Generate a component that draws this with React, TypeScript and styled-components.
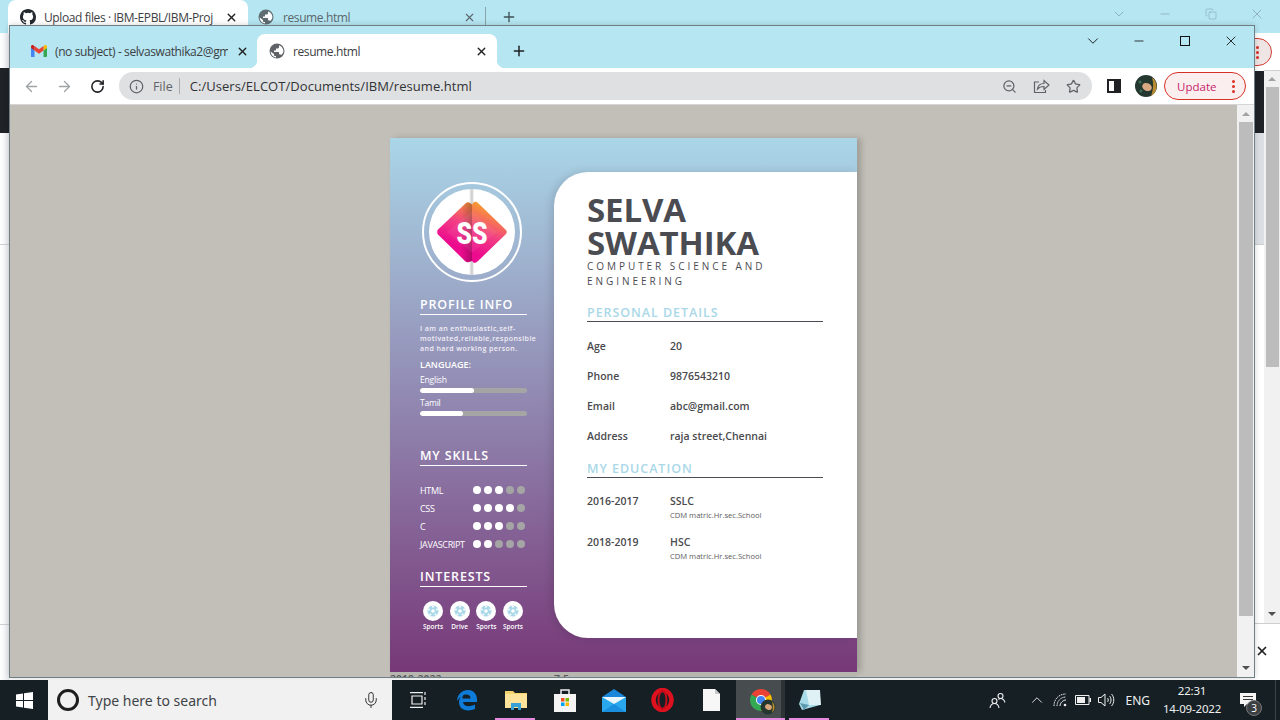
import React from "react";
import styled, { createGlobalStyle } from "styled-components";
import { ArrowLeft, ArrowRight, RotateCw, Info, ZoomOut, Star, X, Plus, ChevronDown, ChevronUp, Minus, Copy, Mic } from "lucide-react";

const GlobalStyle = createGlobalStyle`
  html, body {
    margin: 0;
    padding: 0;
    width: 1280px;
    height: 720px;
    overflow: hidden;
    font-family: "Open Sans", "Noto Sans", sans-serif;
  }
  * { box-sizing: border-box; }
`;

const Screen = styled.div`
  width: 1280px;
  height: 720px;
  display: flex;
  flex-direction: column;
  overflow: hidden;
`;

const Desktop = styled.div`
  position: relative;
  height: 680px;
  background: #fff;
  overflow: hidden;
`;

/* window behind the active one */
const BackWindow = styled.div`
  position: absolute;
  inset: 0;
  background: linear-gradient(90deg, #fff 0, #e9ebef 9px, #fff 10px);
`;

const BackStrip = styled.div`
  height: 33px;
  background: #b5e6f2;
  display: flex;
  align-items: flex-start;
  padding-left: 8px;
`;

const BackTabActive = styled.div`
  width: 240px;
  height: 34px;
  background: #fff;
  border-radius: 8px 8px 0 0;
  display: flex;
  align-items: center;
  padding: 0 10px 0 12px;
  gap: 8px;
  font-size: 12px;
  color: #3c4043;
`;

const BackTab = styled.div`
  width: 238px;
  height: 20px;
  margin-top: 7px;
  display: flex;
  align-items: center;
  padding: 0 9px 0 10px;
  gap: 9px;
  font-size: 12px;
  color: #5b666b;
  border-right: 1px solid #8aa4ab;
`;

const TabTitle = styled.span`
  flex: 1;
  min-width: 0;
  overflow: hidden;
  white-space: nowrap;
  letter-spacing: -0.4px;
`;

const BackControls = styled.div`
  position: absolute;
  top: 0;
  right: 0;
  height: 28px;
  display: flex;
  align-items: center;
  color: #7d9aa3;
`;

const BackControl = styled.span`
  width: 46px;
  display: flex;
  justify-content: center;
`;

const BackPlus = styled.span`
  color: #3f5257;
  margin: 9px 0 0 15px;
  display: flex;
`;

const DarkBand = styled.div<{ $side: "left" | "right" }>`
  position: absolute;
  background: #1f2226;
  ${(p) =>
    p.$side === "left"
      ? "left: 0; width: 10px; top: 68px; height: 65px;"
      : "left: 1254px; width: 10px; top: 71px; height: 62px;"}
`;

const RightShade = styled.div`
  position: absolute;
  left: 1254px;
  top: 133px;
  width: 10px;
  height: 111px;
  background: #dcdfe3;
`;

const SideRule = styled.div<{ $left: number; $top: number; $width: number }>`
  position: absolute;
  left: ${(p) => p.$left}px;
  top: ${(p) => p.$top}px;
  width: ${(p) => p.$width}px;
  height: 1px;
  background: #cdced2;
`;

const BackUpdate = styled.div`
  position: absolute;
  left: 1236px;
  top: 38px;
  width: 36px;
  height: 28px;
  border: 1px solid #d23a32;
  border-radius: 14px;
  background: #f0e5e5;
  display: flex;
  align-items: center;
  justify-content: flex-end;
  padding-right: 12px;
`;

const BackScroll = styled.div`
  position: absolute;
  left: 1264px;
  top: 70px;
  width: 16px;
  height: 553px;
  background: #f1f1f1;
  border-top: 1px solid #d0d0d0;
  display: flex;
  flex-direction: column;
  align-items: center;
`;

const BackThumb = styled.div`
  width: 13px;
  height: 280px;
  margin-bottom: 239px;
  background: #bcbcbc;
`;

const CloseGlyph = styled.span`
  position: absolute;
  left: 1255px;
  top: 644px;
  display: flex;
  color: #222;
`;

const FrontWindow = styled.div`
  position: absolute;
  left: 9px;
  top: 25px;
  width: 1246px;
  height: 653px;
  border: 1px solid #6f7f85;
  box-shadow: 0 0 6px rgba(0, 0, 0, 0.18);
  display: flex;
  flex-direction: column;
  background: #fff;
`;

const TabStrip = styled.div`
  height: 42px;
  background: #b5e6f2;
  display: flex;
  align-items: flex-end;
  padding-left: 7px;
  flex-shrink: 0;
`;

const Tab = styled.div<{ $active?: boolean }>`
  position: relative;
  height: 34px;
  width: 240px;
  display: flex;
  align-items: center;
  gap: 8px;
  padding: 0 ${(p) => (p.$active ? "9px 0 12px" : "8px 0 14px")};
  font-size: 12px;
  border-radius: 8px 8px 0 0;
  background: ${(p) => (p.$active ? "#fff" : "transparent")};
  color: #3c4043;
  ${(p) =>
    p.$active &&
    `
    &::before, &::after {
      content: "";
      position: absolute;
      bottom: 0;
      width: 8px;
      height: 8px;
    }
    &::before {
      left: -8px;
      background: radial-gradient(circle at 0 0, transparent 8px, #fff 8.5px);
    }
    &::after {
      right: -8px;
      background: radial-gradient(circle at 100% 0, transparent 8px, #fff 8.5px);
    }
  `}
`;

const PlusSlot = styled.span`
  display: flex;
  margin: 0 0 9px 14px;
  color: #202124;
`;

const WinControls = styled.div`
  position: absolute;
  top: 0;
  right: 0;
  height: 29px;
  display: flex;
  align-items: center;
`;

const WinControl = styled.span`
  width: 46px;
  display: flex;
  justify-content: center;
  color: #111;
`;

const MaximizeBox = styled.span`
  width: 10px;
  height: 10px;
  border: 1px solid #111;
`;

const Toolbar = styled.div`
  height: 37px;
  background: #fff;
  display: flex;
  align-items: center;
  padding: 0 8px 0 5px;
  flex-shrink: 0;
  border-bottom: 1px solid #d5d5d5;
`;

const NavButton = styled.span<{ $dim?: boolean }>`
  width: 33px;
  display: flex;
  justify-content: center;
  color: ${(p) => (p.$dim ? "#a0a3a6" : "#202124")};
`;

const Omnibox = styled.div`
  margin-left: 5px;
  width: 974px;
  height: 28px;
  border-radius: 14px;
  background: #dfe0e1;
  display: flex;
  align-items: center;
  padding: 0 11px 0 10px;
  font-size: 13px;
  color: #303336;
`;

const OriginChip = styled.span`
  display: flex;
  align-items: center;
  gap: 9px;
  color: #5f6368;
  padding-right: 6px;
  margin-right: 10px;
  border-right: 1px solid #a9abad;
  height: 16px;
  font-size: 12.5px;
`;

const Url = styled.span`
  flex: 1;
  letter-spacing: 0.05px;
`;

const OmniIcons = styled.span`
  display: flex;
  align-items: center;
  gap: 16px;
  color: #5f6368;
`;

const SidePanelIcon = styled.span`
  width: 14px;
  height: 14px;
  border: 2px solid #202124;
  margin-left: 15px;
  background: linear-gradient(90deg, #fff 50%, #202124 50%);
`;

const AvatarSlot = styled.span`
  display: flex;
  margin-left: 14px;
`;

const UpdateButton = styled.div`
  margin-left: 7px;
  width: 82px;
  height: 28px;
  border: 1px solid #d93025;
  border-radius: 14px;
  background: #fbeeee;
  display: flex;
  align-items: center;
  justify-content: space-between;
  padding: 0 10px 0 12px;
  font-size: 11.5px;
  color: #c5266a;
`;

const Kebab = styled.span`
  display: flex;
  flex-direction: column;
  gap: 2px;
`;

const KebabDot = styled.i`
  width: 3px;
  height: 3px;
  border-radius: 50%;
  background: #d93025;
`;

const Viewport = styled.div`
  flex: 1;
  min-height: 0;
  display: flex;
  background: #c2bfb8;
`;

const PageArea = styled.div`
  flex: 1;
  overflow: hidden;
  padding: 33px 0 0 380px;
`;

const Scrollbar = styled.div`
  width: 17px;
  background: #f1f1f1;
  display: flex;
  flex-direction: column;
  align-items: center;
  padding-top: 1px;
`;

const ScrollArrow = styled.span<{ $down?: boolean }>`
  width: 0;
  height: 0;
  border-left: 4px solid transparent;
  border-right: 4px solid transparent;
  ${(p) => (p.$down ? "border-top: 4px solid #505050;" : "border-bottom: 4px solid #a3a3a3;")}
  margin: 6px 0;
`;

const ScrollThumb = styled.div`
  width: 14px;
  height: 494px;
  background: #bcbcbc;
  margin-bottom: 44px;
`;

/* the resume page */
const Resume = styled.div`
  width: 467px;
  height: 534px;
  background: linear-gradient(180deg, #aad6e8 0%, #773878 100%);
  box-shadow: 4px 0 6px rgba(0, 0, 0, 0.18);
  display: flex;
`;

/* top of the next sheet, cut off by the window edge */
const NextPage = styled.div`
  width: 467px;
  height: 14px;
  background: #b7b5af;
  display: grid;
  grid-template-columns: 164px 1fr;
  font-size: 10.5px;
  font-weight: 600;
  line-height: 14px;
  color: #55565a;
`;

const LeftCol = styled.div`
  width: 164px;
  padding: 44px 0 0 30px;
  flex-shrink: 0;
`;

const Logo = styled.div`
  width: 100px;
  height: 100px;
  border: 2px solid #fff;
  border-radius: 50%;
  padding: 5px;
  margin: 0 0 14px 2px;
`;

const LogoInner = styled.div`
  width: 100%;
  height: 100%;
  background: #fff;
  border-radius: 50%;
  overflow: hidden;
  display: flex;
`;

const SideTitle = styled.div<{ $gap: number }>`
  width: 107px;
  margin-top: ${(p) => p.$gap}px;
  color: #fff;
  font-size: 12.5px;
  font-weight: 600;
  letter-spacing: 0.85px;
  line-height: 18px;
  border-bottom: 1px solid #fff;
  white-space: nowrap;
`;

const About = styled.p`
  margin: 9px 0 0;
  width: 122px;
  color: #f3eef6;
  font-size: 7px;
  font-weight: 600;
  line-height: 10px;
  letter-spacing: 0.44px;
`;

const LangTitle = styled.div`
  margin-top: 5px;
  color: #fff;
  font-size: 9px;
  font-weight: 600;
  line-height: 11px;
`;

const BarLabel = styled.div`
  margin-top: 4px;
  color: #fff;
  font-size: 8.5px;
  line-height: 12px;
  letter-spacing: -0.2px;
`;

const BarTrack = styled.div`
  width: 107px;
  height: 5px;
  margin-top: 2px;
  background: #a5a5a5;
  border-radius: 3px;
  overflow: hidden;
`;

const BarFill = styled.div`
  height: 100%;
  background: #fff;
  border-radius: 3px;
`;

const SkillList = styled.div`
  width: 107px;
  margin-top: 18px;
  padding-right: 2px;
  display: flex;
  flex-direction: column;
  gap: 6px;
`;

const SkillRow = styled.div`
  height: 12px;
  display: flex;
  align-items: center;
  justify-content: space-between;
  color: #fff;
  font-size: 9px;
  letter-spacing: -0.35px;
`;

const Dots = styled.span`
  display: flex;
  gap: 3px;
`;

const Dot = styled.i<{ $on: boolean }>`
  width: 8px;
  height: 8px;
  border-radius: 50%;
  background: ${(p) => (p.$on ? "#fff" : "#a5a5a5")};
`;

const Interests = styled.div`
  width: 107px;
  margin-top: 14px;
  display: flex;
  justify-content: space-between;
  padding: 0 4px 0 3px;
`;

const Interest = styled.div`
  width: 20px;
  display: flex;
  flex-direction: column;
  align-items: center;
  color: #fff;
  font-size: 6.5px;
  font-weight: 600;
  line-height: 9px;
  gap: 1px;
`;

const InterestIcon = styled.span`
  width: 20px;
  height: 20px;
  border-radius: 50%;
  background: #fff;
  display: flex;
  align-items: center;
  justify-content: center;
`;

const Sheet = styled.div`
  width: 303px;
  height: 466px;
  margin-top: 34px;
  background: #fff;
  border-radius: 34px 0 0 34px;
  padding: 21px 34px 0 33px;
  box-shadow: -3px 0 8px rgba(0, 0, 0, 0.12);
  color: #4a4a4e;
`;

const Name = styled.h1`
  margin: 0;
  font-size: 33px;
  font-weight: 700;
  line-height: 33px;
  letter-spacing: -0.1px;
  color: #4b4c52;
  width: 200px;
`;

const Role = styled.div`
  font-size: 10px;
  line-height: 15px;
  letter-spacing: 2.95px;
  color: #4b4c52;
`;

const SectionTitle = styled.div<{ $gap: number }>`
  margin-top: ${(p) => p.$gap}px;
  color: #a9d8e8;
  font-size: 12.5px;
  font-weight: 600;
  letter-spacing: 0.95px;
  line-height: 17px;
  border-bottom: 1px solid #4b4c52;
`;

const DetailList = styled.div`
  margin-top: 9px;
  display: grid;
  grid-template-columns: 83px 1fr;
  grid-auto-rows: 30px;
  align-items: center;
  font-size: 10.5px;
  font-weight: 600;
`;

const EduList = styled.div`
  margin-top: 16px;
  display: grid;
  grid-template-columns: 83px 1fr;
  grid-auto-rows: 41px;
  font-size: 10.5px;
  font-weight: 600;
`;

const EduSchool = styled.div`
  margin-top: 2px;
  font-size: 7.6px;
  font-weight: 400;
  line-height: 10px;
  color: #5c5c60;
`;

const Cell = styled.div`
  line-height: 14px;
`;

const Taskbar = styled.div`
  height: 40px;
  background: #151f24;
  display: flex;
  align-items: center;
  flex-shrink: 0;
`;

const StartSlot = styled.div`
  width: 48px;
  display: flex;
  justify-content: center;
`;

const SearchBox = styled.div`
  width: 344px;
  height: 40px;
  background: #f1f1f1;
  display: flex;
  align-items: center;
  padding: 0 12px 0 9px;
  gap: 9px;
  color: #3f4447;
  font-size: 14px;
`;

const Cortana = styled.span`
  width: 22px;
  height: 22px;
  border: 3px solid #1e1e1e;
  border-radius: 50%;
`;

const SearchText = styled.span`
  flex: 1;
  font-family: "Noto Sans", sans-serif;
`;

const TaskIcons = styled.div`
  display: flex;
  height: 40px;
  margin-left: 1px;
`;

const TaskIcon = styled.div<{ $open?: boolean; $active?: boolean }>`
  position: relative;
  width: 49px;
  height: 40px;
  display: flex;
  align-items: center;
  justify-content: center;
  background: ${(p) => (p.$active ? "linear-gradient(90deg, #474c4f 45px, #2d3235 45px)" : "transparent")};
  ${(p) =>
    p.$open &&
    `
    &::after {
      content: "";
      position: absolute;
      bottom: 0;
      height: 2px;
      background: #e58adf;
      left: ${p.$active ? "0" : "4px"};
      right: ${p.$active ? "0" : "5px"};
    }
  `}
`;

const Tray = styled.div`
  margin-left: auto;
  display: flex;
  align-items: center;
  height: 40px;
  padding-right: 4px;
  color: #f0f0f0;
`;

const TrayIcons = styled.div`
  display: flex;
  align-items: center;
  gap: 7px;
`;

const TrayChevron = styled(ChevronUp)`
  margin-left: 15px;
`;

const Lang = styled.span`
  font-size: 12px;
  margin-left: 10px;
  font-family: "Noto Sans", sans-serif;
`;

const Clock = styled.div`
  width: 70px;
  margin-left: 7px;
  text-align: center;
  font-size: 11.5px;
  letter-spacing: -0.2px;
  line-height: 18px;
  font-family: "Noto Sans", sans-serif;
`;

const Notify = styled.div`
  position: relative;
  width: 41px;
  height: 40px;
  display: flex;
  align-items: center;
  justify-content: center;
`;

const Badge = styled.span`
  position: absolute;
  left: 19px;
  top: 20px;
  width: 16px;
  height: 16px;
  border-radius: 50%;
  background: #3b3f42;
  border: 1px solid #777;
  color: #fff;
  font-size: 10px;
  line-height: 14px;
  text-align: center;
`;

const TraySeparator = styled.span`
  width: 1px;
  height: 40px;
  margin-left: 7px;
  background: #3a4347;
`;

const GithubMark = () => (
  <svg width="16" height="16" viewBox="0 0 16 16" fill="#24292f">
    <path d="M8 0C3.58 0 0 3.58 0 8c0 3.54 2.29 6.53 5.47 7.59.4.07.55-.17.55-.38 0-.19-.01-.82-.01-1.49-2.01.37-2.53-.49-2.69-.94-.09-.23-.48-.94-.82-1.13-.28-.15-.68-.52-.01-.53.63-.01 1.08.58 1.23.82.72 1.21 1.87.87 2.33.66.07-.52.28-.87.51-1.07-1.78-.2-3.64-.89-3.64-3.95 0-.87.31-1.59.82-2.15-.08-.2-.36-1.02.08-2.12 0 0 .67-.21 2.2.82a7.5 7.5 0 0 1 4 0c1.53-1.04 2.2-.82 2.2-.82.44 1.1.16 1.92.08 2.12.51.56.82 1.27.82 2.15 0 3.07-1.87 3.75-3.65 3.95.29.25.54.73.54 1.48 0 1.07-.01 1.93-.01 2.2 0 .21.15.46.55.38A8 8 0 0 0 16 8c0-4.42-3.58-8-8-8z" />
  </svg>
);

const GmailMark = () => (
  <svg width="16" height="12" viewBox="0 0 16 12">
    <path d="M0 2v9c0 .6.4 1 1 1h2.500V5.200z" fill="#4285f4" />
    <path d="M16 2v9c0 .6-.4 1-1 1h-2.500V5.200z" fill="#34a853" />
    <path d="M12.500 1v4.500L16 3V1.500C16 .3 14.700-.4 13.800.3z" fill="#fbbc04" />
    <path d="M3.500 1v4.500L8 8.800l4.500-3.300V1L8 4.300z" fill="#ea4335" />
    <path d="M0 1.500V3l3.500 2.500V1L2.200.3C1.300-.4 0 .3 0 1.500z" fill="#c5221f" />
  </svg>
);

// Chrome's filled globe for local files
const GlobeMark = ({ color }: { color: string }) => (
  <svg width="16" height="16" viewBox="0 0 16 16">
    <circle cx="8" cy="8" r="7.500" fill={color} />
    <path d="M7 14.400C4 14 1.800 11.500 1.600 8.500L5 11v1c0 .6.500 1 1 1h1zM12 12c-.2-.5-.7-.8-1.200-.8H10V9.500c0-.3-.2-.5-.5-.5H5V7.500h1.500c.3 0 .5-.2.5-.5V5.500h1.500c.7 0 1.500-.6 1.500-1.300V2.300c2.500 1 4.400 3.200 4.400 5.700 0 1.600-.9 3-2.400 4z" fill="#fff" />
  </svg>
);

const ShareMark = () => (
  <svg width="17" height="16" viewBox="0 0 17 16" fill="none" stroke="#5f6368" strokeWidth="1.200">
    <path d="M6 4H1.500v10.500h11V12" />
    <path d="M4.500 11c.4-3.500 3-5.500 6.500-5.500V2.500l5 4.500-5 4.500V8.500c-2.800 0-5 .7-6.500 2.500z" />
  </svg>
);

const AvatarMark = () => (
  <svg width="22" height="22" viewBox="0 0 22 22">
    <circle cx="11" cy="11" r="11" fill="#24382f" />
    <path d="M17 2.500A11 11 0 0 1 16 21c2-5 3-12 1-18.500z" fill="#b98a2e" />
    <ellipse cx="12" cy="12" rx="5" ry="3.800" fill="#dba883" transform="rotate(25 12 12)" />
    <circle cx="5" cy="7" r="1.500" fill="#3f6d5c" />
    <circle cx="6" cy="16" r="1.500" fill="#3f6d5c" />
  </svg>
);

const SsLogo = () => (
  <svg width="86" height="86" viewBox="0 0 86 86">
    <defs>
      <linearGradient id="ssGrad" x1="0.7" y1="0.05" x2="0.35" y2="0.75">
        <stop offset="0" stopColor="#f9a12c" />
        <stop offset="0.55" stopColor="#f23f84" />
        <stop offset="1" stopColor="#ec0b8e" />
      </linearGradient>
      <linearGradient id="ssFold" x1="0" y1="0" x2="1" y2="0">
        <stop offset="0" stopColor="#000" stopOpacity="0" />
        <stop offset="1" stopColor="#000" stopOpacity="0.25" />
      </linearGradient>
      <linearGradient id="ssCrease" x1="0" y1="0" x2="1" y2="0">
        <stop offset="0" stopColor="#000" stopOpacity="0" />
        <stop offset="0.6" stopColor="#000" stopOpacity="0.22" />
        <stop offset="1" stopColor="#000" stopOpacity="0" />
      </linearGradient>
    </defs>
    <rect x="40" y="0" width="5" height="86" fill="url(#ssCrease)" />
    <path d="M8.500 41 Q8 43 8.500 45 L36 72 Q38 74 40 73 L43 72 L45 74 Q47 74 49 72 L77 45 Q78.500 43 77 41 L49 14 Q47 12 45 13 L43 15.500 L41 14 Q39 12.500 37 14 Z" fill="url(#ssGrad)" />
    <path d="M32 18.500 L37 14 Q39 12.500 41 14 L43 15.500 L43 72 L40 73 Q38 74 36 72 L32 68 Z" fill="url(#ssFold)" />
    <path d="M18 43 L43 22 L68 43 L43 64 Z" fill="#fff" opacity="0.06" />
    <text x="43" y="54.500" textAnchor="middle" fontFamily="Roboto, sans-serif" fontWeight="900" fontSize="32" textLength="31" lengthAdjust="spacingAndGlyphs" fill="#fff">SS</text>
  </svg>
);

const Ball = () => (
  <svg width="12" height="12" viewBox="0 0 12 12">
    <circle cx="6" cy="6" r="5.500" fill="#a9d8e8" />
    <circle cx="6" cy="6" r="1.800" fill="#fff" />
    <circle cx="6" cy="1.700" r="1" fill="#fff" />
    <circle cx="1.900" cy="4.500" r="1" fill="#fff" />
    <circle cx="10.100" cy="4.500" r="1" fill="#fff" />
    <circle cx="3.400" cy="9.600" r="1" fill="#fff" />
    <circle cx="8.600" cy="9.600" r="1" fill="#fff" />
  </svg>
);

const WindowsLogo = () => (
  <svg width="17" height="17" viewBox="0 0 17 17" fill="#fff">
    <path d="M0 2.400 7 1.400V8H0zM8 1.300 17 0v8H8zM0 9h7v6.600l-7-1zM8 9h9v8l-9-1.300z" />
  </svg>
);

const TaskViewIcon = () => (
  <svg width="16" height="16" viewBox="0 0 16 16" fill="none" stroke="#f0f0f0" strokeWidth="1.200">
    <path d="M0 .6h13M2 4h10v8H2zM0 15.400h13M15 0v3M15 5v3M15 10v3" />
  </svg>
);

const EdgeIcon = () => (
  <svg width="22" height="22" viewBox="0 0 22 22">
    <path d="M1 12C1.500 5 6 1 12 1c6 0 9 4.500 9 10v2H7c.5 4.500 6.500 5.500 12 2.600v4.400c-7 3-16 1.500-16-7 0-3 1.500-5.500 4.500-7C6.500 7.500 6.400 8.500 6.500 9.500h8c0-5-7-6.500-13.500 2.500z" fill="#0f7bd8" />
  </svg>
);

const FolderIcon = () => (
  <svg width="22" height="20" viewBox="0 0 22 20">
    <path d="M0 1h8l2 2h12v15H0z" fill="#f3d36b" />
    <path d="M0 4h22v14H0z" fill="#fde49a" />
    <path d="M6 13h10v7h-3v-3h-4v3H6z" fill="#3aa0d8" />
  </svg>
);

const StoreIcon = () => (
  <svg width="24" height="24" viewBox="0 0 24 24">
    <path d="M8 6V2h8v4" fill="none" stroke="#eee" strokeWidth="1.500" />
    <path d="M1 6h22v18H1z" fill="#f4f4f4" />
    <path d="M8 10h3.500v3.500H8z" fill="#f25022" />
    <path d="M12.500 10H16v3.500h-3.500z" fill="#7fba00" />
    <path d="M8 14.500h3.500V18H8z" fill="#00a4ef" />
    <path d="M12.500 14.500H16V18h-3.500z" fill="#ffb900" />
  </svg>
);

const MailIcon = () => (
  <svg width="24" height="23" viewBox="0 0 24 23">
    <path d="M0 8 12 0l12 8v15H0z" fill="#1a86d9" />
    <path d="M0 8h24v15H0z" fill="#29a8ee" />
    <path d="M0 8h24L12 15z" fill="#eaf6fd" />
    <path d="M0 23 12 15l12 8z" fill="#1a8fe0" />
  </svg>
);

const OperaIcon = () => (
  <svg width="23" height="24" viewBox="0 0 23 24">
    <ellipse cx="11.500" cy="12" rx="9" ry="10" fill="none" stroke="#e0111e" strokeWidth="4.500" />
    <ellipse cx="11.500" cy="12" rx="4" ry="9" fill="none" stroke="#c50d1a" strokeWidth="2" />
  </svg>
);

const FileIcon = () => (
  <svg width="17" height="22" viewBox="0 0 17 22">
    <path d="M0 0h12l5 5v17H0z" fill="#f7f7f7" />
    <path d="M12 0l5 5h-5z" fill="#c8c8c8" />
  </svg>
);

const ChromeIcon = () => (
  <svg width="30" height="30" viewBox="0 0 30 30">
    <path d="M15 15 5.500 9.500A11 11 0 0 1 24.500 9.500z" fill="#ea4335" />
    <path d="M15 15 24.500 9.500A11 11 0 0 1 15 26z" fill="#fbbc04" />
    <path d="M15 15 15 26A11 11 0 0 1 5.500 9.500z" fill="#34a853" />
    <circle cx="15" cy="15" r="5" fill="#fff" />
    <circle cx="15" cy="15" r="4" fill="#4285f4" />
    <circle cx="22" cy="22" r="7.500" fill="#24382f" />
    <ellipse cx="22.500" cy="22" rx="3.500" ry="2.800" fill="#d9a67c" transform="rotate(25 22.500 22)" />
    <path d="M26 16.500A7.500 7.500 0 0 1 26 28c1-4 1-8 0-11.500z" fill="#b98a2e" />
  </svg>
);

const NotepadIcon = () => (
  <svg width="23" height="22" viewBox="0 0 23 22">
    <path d="M6 1h14l2 15-18 5-3-6z" fill="#a8dbe8" />
    <path d="M8 1h14l1 15H11z" fill="#dff1f5" />
    <path d="M2 14 11 16l-5 5z" fill="#5e9bb0" />
  </svg>
);

const PeopleIcon = () => (
  <svg width="17" height="17" viewBox="0 0 17 17" fill="none" stroke="#f0f0f0" strokeWidth="1.100">
    <circle cx="5.500" cy="9" r="2.500" />
    <circle cx="11.500" cy="4" r="2.500" />
    <path d="M1 16c.5-3 2-4.500 4.500-4.500S9.500 13 10 16M9.500 7.500c.5-.5 1.200-1 2-1 2.500 0 3.800 1.500 4.500 4" />
  </svg>
);

const WifiIcon = () => (
  <svg width="15" height="14" viewBox="0 0 15 14" fill="none" stroke="#f0f0f0" strokeWidth="1">
    <path d="M1 13C1 6 6 1 13 1" strokeDasharray="1.500 .8" />
    <path d="M4 13C4 8 8 4 13 4" strokeDasharray="1.500 .8" />
    <path d="M7 13C7 10 10 7 13 7" />
    <circle cx="12" cy="12" r="1.300" fill="#f0f0f0" stroke="none" />
  </svg>
);

const BatteryIcon = () => (
  <svg width="16" height="10" viewBox="0 0 16 10">
    <path d="M.5.500h13.500v9H.5z" fill="none" stroke="#f0f0f0" />
    <path d="M2 2h8v6H2zM14.500 3H16v4h-1.500z" fill="#f0f0f0" />
  </svg>
);

const SpeakerIcon = () => (
  <svg width="17" height="14" viewBox="0 0 17 14" fill="none" stroke="#f0f0f0" strokeWidth="1">
    <path d="M.5 4.500h2.500L7 1v12L3 9.500H.5zM9.500 5c1 1 1 3 0 4M11.500 3c2 2 2 6 0 8M13.500 1c3 3 3 9 0 12" />
  </svg>
);

const NotifyIcon = () => (
  <svg width="16" height="15" viewBox="0 0 16 15" fill="#f5f5f5">
    <path d="M0 0h16v11H7l-3 3v-3H0z" />
    <path d="M3 3h10v1H3zM3 6h10v1H3z" fill="#333" />
  </svg>
);

const skills: [string, number][] = [["HTML", 3], ["CSS", 4], ["C", 3], ["JAVASCRIPT", 2]];
const details = [["Age", "20"], ["Phone", "9876543210"], ["Email", "abc@gmail.com"], ["Address", "raja street,Chennai"]];
const education = [["2016-2017", "SSLC"], ["2018-2019", "HSC"]];

export default function App() {
  return (
    <Screen>
      <GlobalStyle />
      <Desktop>
        <BackWindow>
          <BackStrip>
            <BackTabActive>
              <GithubMark />
              <TabTitle>Upload files · IBM-EPBL/IBM-Proj</TabTitle>
              <X size={13} strokeWidth={2.5} color="#222" />
            </BackTabActive>
            <BackTab>
              <GlobeMark color="#5f6c72" />
              <TabTitle>resume.html</TabTitle>
              <X size={13} strokeWidth={2} color="#5b666b" />
            </BackTab>
            <BackPlus><Plus size={16} strokeWidth={2} /></BackPlus>
          </BackStrip>
          <BackControls>
            <BackControl><ChevronDown size={16} strokeWidth={1} /></BackControl>
            <BackControl><Minus size={14} strokeWidth={1} /></BackControl>
            <BackControl><Copy size={12} strokeWidth={1} /></BackControl>
            <BackControl><X size={16} strokeWidth={1} /></BackControl>
          </BackControls>
          <DarkBand $side="left" />
          <DarkBand $side="right" />
          <RightShade />
          <SideRule $left={0} $top={244} $width={10} />
          <SideRule $left={0} $top={624} $width={10} />
          <SideRule $left={1254} $top={244} $width={10} />
          <SideRule $left={1254} $top={623} $width={26} />
          <BackUpdate>
            <Kebab><KebabDot /><KebabDot /><KebabDot /></Kebab>
          </BackUpdate>
          <BackScroll>
            <ScrollArrow />
            <BackThumb />
            <ScrollArrow $down />
          </BackScroll>
          <CloseGlyph><X size={14} strokeWidth={3} /></CloseGlyph>
        </BackWindow>

        <FrontWindow>
          <TabStrip>
            <Tab>
              <GmailMark />
              <TabTitle>(no subject) - selvaswathika2@gm</TabTitle>
              <X size={13} strokeWidth={2.5} color="#222" />
            </Tab>
            <Tab $active>
              <GlobeMark color="#5f6368" />
              <TabTitle>resume.html</TabTitle>
              <X size={13} strokeWidth={2.5} color="#222" />
            </Tab>
            <PlusSlot><Plus size={16} strokeWidth={2.2} /></PlusSlot>
          </TabStrip>
          <WinControls>
            <WinControl><ChevronDown size={18} strokeWidth={1.2} /></WinControl>
            <WinControl><Minus size={14} strokeWidth={1.4} /></WinControl>
            <WinControl><MaximizeBox /></WinControl>
            <WinControl><X size={16} strokeWidth={1.3} /></WinControl>
          </WinControls>
          <Toolbar>
            <NavButton $dim><ArrowLeft size={17} strokeWidth={1.8} /></NavButton>
            <NavButton $dim><ArrowRight size={17} strokeWidth={1.8} /></NavButton>
            <NavButton><RotateCw size={15} strokeWidth={2.5} /></NavButton>
            <Omnibox>
              <OriginChip><Info size={15} />File</OriginChip>
              <Url>C:/Users/ELCOT/Documents/IBM/resume.html</Url>
              <OmniIcons>
                <ZoomOut size={15} />
                <ShareMark />
                <Star size={15} />
              </OmniIcons>
            </Omnibox>
            <SidePanelIcon />
            <AvatarSlot><AvatarMark /></AvatarSlot>
            <UpdateButton>
              Update
              <Kebab><KebabDot /><KebabDot /><KebabDot /></Kebab>
            </UpdateButton>
          </Toolbar>
          <Viewport>
            <PageArea>
              <Resume>
                <LeftCol>
                  <Logo><LogoInner><SsLogo /></LogoInner></Logo>
                  <SideTitle $gap={0}>PROFILE INFO</SideTitle>
                  <About>I am an enthusiastic,self-motivated,reliable,responsible and hard working person.</About>
                  <LangTitle>LANGUAGE:</LangTitle>
                  <BarLabel>English</BarLabel>
                  <BarTrack><BarFill style={{ width: "50%" }} /></BarTrack>
                  <BarLabel>Tamil</BarLabel>
                  <BarTrack><BarFill style={{ width: "40%" }} /></BarTrack>
                  <SideTitle $gap={31}>MY SKILLS</SideTitle>
                  <SkillList>
                    {skills.map(([name, level]) => (
                      <SkillRow key={name}>
                        {name}
                        <Dots>
                          {[1, 2, 3, 4, 5].map((n) => <Dot key={n} $on={n <= level} />)}
                        </Dots>
                      </SkillRow>
                    ))}
                  </SkillList>
                  <SideTitle $gap={18}>INTERESTS</SideTitle>
                  <Interests>
                    {["Sports", "Drive", "Sports", "Sports"].map((label, i) => (
                      <Interest key={i}>
                        <InterestIcon><Ball /></InterestIcon>
                        {label}
                      </Interest>
                    ))}
                  </Interests>
                </LeftCol>
                <Sheet>
                  <Name>SELVA SWATHIKA</Name>
                  <Role>COMPUTER SCIENCE AND ENGINEERING</Role>
                  <SectionTitle $gap={15}>PERSONAL DETAILS</SectionTitle>
                  <DetailList>
                    {details.map(([k, v]) => (
                      <React.Fragment key={k}>
                        <Cell>{k}</Cell>
                        <Cell>{v}</Cell>
                      </React.Fragment>
                    ))}
                  </DetailList>
                  <SectionTitle $gap={9}>MY EDUCATION</SectionTitle>
                  <EduList>
                    {education.map(([years, title]) => (
                      <React.Fragment key={years}>
                        <Cell>{years}</Cell>
                        <Cell>
                          {title}
                          <EduSchool>CDM matric.Hr.sec.School</EduSchool>
                        </Cell>
                      </React.Fragment>
                    ))}
                  </EduList>
                </Sheet>
              </Resume>
              <NextPage>
                <span>2019-2022</span>
                <span>7.5</span>
              </NextPage>
            </PageArea>
            <Scrollbar>
              <ScrollArrow />
              <ScrollThumb />
              <ScrollArrow $down />
            </Scrollbar>
          </Viewport>
        </FrontWindow>
      </Desktop>
      <Taskbar>
        <StartSlot><WindowsLogo /></StartSlot>
        <SearchBox>
          <Cortana />
          <SearchText>Type here to search</SearchText>
          <Mic size={18} strokeWidth={1.2} color="#222" />
        </SearchBox>
        <TaskIcons>
          <TaskIcon><TaskViewIcon /></TaskIcon>
          <TaskIcon><EdgeIcon /></TaskIcon>
          <TaskIcon $open><FolderIcon /></TaskIcon>
          <TaskIcon><StoreIcon /></TaskIcon>
          <TaskIcon><MailIcon /></TaskIcon>
          <TaskIcon><OperaIcon /></TaskIcon>
          <TaskIcon><FileIcon /></TaskIcon>
          <TaskIcon $open $active><ChromeIcon /></TaskIcon>
          <TaskIcon $open><NotepadIcon /></TaskIcon>
        </TaskIcons>
        <Tray>
          <TrayIcons>
            <PeopleIcon />
            <TrayChevron size={18} strokeWidth={1.2} />
            <WifiIcon />
            <BatteryIcon />
            <SpeakerIcon />
          </TrayIcons>
          <Lang>ENG</Lang>
          <Clock>22:31<br />14-09-2022</Clock>
          <Notify>
            <NotifyIcon />
            <Badge>3</Badge>
          </Notify>
          <TraySeparator />
        </Tray>
      </Taskbar>
    </Screen>
  );
}
